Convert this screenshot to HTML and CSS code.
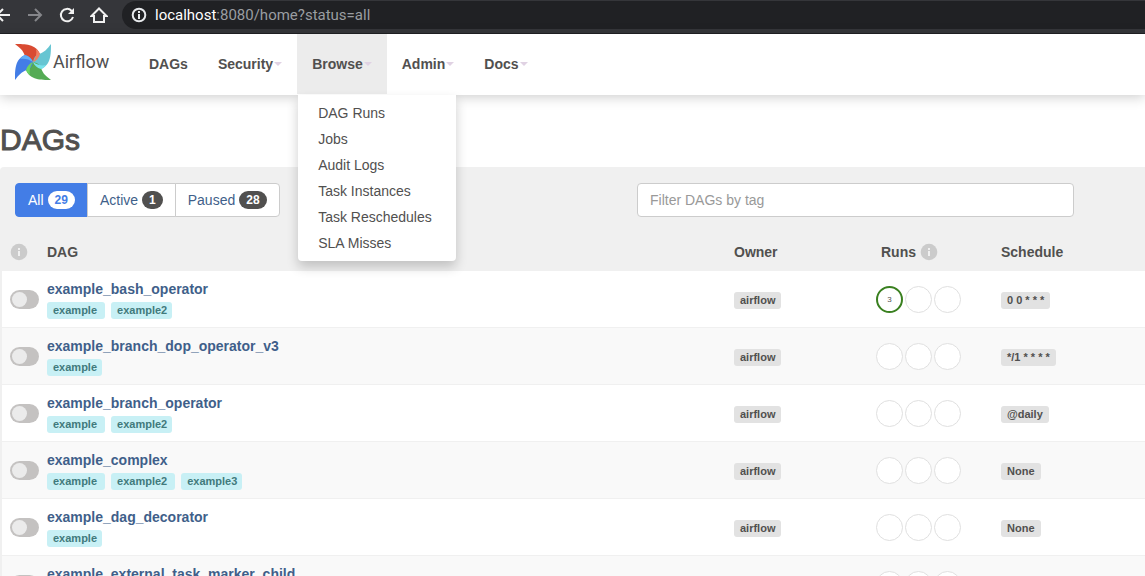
FILE: index.html
```html
<!DOCTYPE html>
<html lang="en">
<head>
    <meta charset="UTF-8">
    <meta name="viewport" content="width=device-width, initial-scale=1.0">
    <title>DAGs - Airflow</title>
    <link rel="stylesheet" href="styles.css">
</head>
<body>
    <div class="browser-bar">
        <button type="button" class="browser-btn" aria-label="Back">
            <svg width="18" height="18" viewBox="0 0 18 18"><path d="M16 9H3M9 3L3 9l6 6"/></svg>
        </button>
        <button type="button" class="browser-btn dim" aria-label="Forward">
            <svg width="18" height="18" viewBox="0 0 18 18"><path d="M2 9h13M9 3l6 6-6 6"/></svg>
        </button>
        <button type="button" class="browser-btn" aria-label="Reload">
            <svg width="18" height="18" viewBox="0 0 18 18"><path d="M15 11A6.200 6.200 0 1 1 13.500 4.700L15 6.200"/><path class="solid" d="M16 2v6h-6z"/></svg>
        </button>
        <button type="button" class="browser-btn" aria-label="Home">
            <svg width="18" height="18" viewBox="0 0 18 18"><path d="M1.500 10L9 2.500l7.500 7.500H14v6H4v-6z"/></svg>
        </button>
        <div class="url">
            <svg width="16" height="16" viewBox="0 0 16 16"><circle cx="8" cy="8" r="6.300"/><path d="M8 7v5M8 4v2"/></svg>
            <span><b>localhost</b>:8080/home?status=all</span>
        </div>
    </div>

    <nav class="navbar">
        <a class="brand" href="#">
            <svg width="36" height="36" viewBox="0 0 36 36">
                <defs>
                    <path id="blade" d="M0 0C10 0 21 0 25 10C24 14 21 17 18 18C13 17 11 15 10 12C8 6 5 4 0 0z"/>
                    <path id="fold" d="M21 5Q24 7 25 10C24 14 21 17 18 18C21 14 22 9 21 5z"/>
                </defs>
                <use href="#blade" fill="#d94b32"/>
                <use href="#blade" fill="#66c5d2" transform="rotate(90 18 18)"/>
                <use href="#blade" fill="#55ab55" transform="rotate(180 18 18)"/>
                <use href="#blade" fill="#437de6" transform="rotate(270 18 18)"/>
                <use href="#fold" fill="#f08063"/>
                <use href="#fold" fill="#78e3ec" transform="rotate(90 18 18)"/>
                <use href="#fold" fill="#68d464" transform="rotate(180 18 18)"/>
                <use href="#fold" fill="#63aff8" transform="rotate(270 18 18)"/>
            </svg>
            <span>Airflow</span>
        </a>
        <ul class="menu">
            <li><a href="#">DAGs</a></li>
            <li><a href="#">Security<i class="caret"></i></a></li>
            <li class="open">
                <a href="#">Browse<i class="caret"></i></a>
                <ul class="dropdown">
                    <li><a href="#">DAG Runs</a></li>
                    <li><a href="#">Jobs</a></li>
                    <li><a href="#">Audit Logs</a></li>
                    <li><a href="#">Task Instances</a></li>
                    <li><a href="#">Task Reschedules</a></li>
                    <li><a href="#">SLA Misses</a></li>
                </ul>
            </li>
            <li><a href="#">Admin<i class="caret"></i></a></li>
            <li><a href="#">Docs<i class="caret"></i></a></li>
        </ul>
    </nav>

    <main>
        <h2>DAGs</h2>
        <div class="panel">
            <div class="filters">
                <div class="btn-group">
                    <a class="btn active" href="#">All <span class="badge">29</span></a>
                    <a class="btn" href="#">Active <span class="badge">1</span></a>
                    <a class="btn" href="#">Paused <span class="badge">28</span></a>
                </div>
                <input type="text" class="tag-filter" placeholder="Filter DAGs by tag" aria-label="Filter DAGs by tag">
            </div>
            <table>
                <thead>
                    <tr>
                        <th class="col-toggle"><svg class="info" width="18" height="18" viewBox="0 0 18 18"><circle cx="9" cy="9" r="8.300"/><path d="M9 8v5M9 5v2"/></svg></th>
                        <th>DAG</th>
                        <th class="col-owner">Owner</th>
                        <th class="col-runs"><span class="runs-head">Runs <svg class="info" width="18" height="18" viewBox="0 0 18 18"><circle cx="9" cy="9" r="8.300"/><path d="M9 8v5M9 5v2"/></svg></span></th>
                        <th class="col-schedule">Schedule</th>
                    </tr>
                </thead>
                <tbody>
                    <tr>
                        <td><input type="checkbox" class="switch" aria-label="example_bash_operator"></td>
                        <td>
                            <a class="dag" href="#">example_bash_operator</a>
                            <div class="tags"><a class="tag" href="#">example</a><a class="tag" href="#">example2</a></div>
                        </td>
                        <td><a class="label" href="#">airflow</a></td>
                        <td><div class="runs"><span class="run success">3</span><span class="run"></span><span class="run"></span></div></td>
                        <td><a class="label" href="#">0 0 * * *</a></td>
                    </tr>
                    <tr>
                        <td><input type="checkbox" class="switch" aria-label="example_branch_dop_operator_v3"></td>
                        <td>
                            <a class="dag" href="#">example_branch_dop_operator_v3</a>
                            <div class="tags"><a class="tag" href="#">example</a></div>
                        </td>
                        <td><a class="label" href="#">airflow</a></td>
                        <td><div class="runs"><span class="run"></span><span class="run"></span><span class="run"></span></div></td>
                        <td><a class="label" href="#">*/1 * * * *</a></td>
                    </tr>
                    <tr>
                        <td><input type="checkbox" class="switch" aria-label="example_branch_operator"></td>
                        <td>
                            <a class="dag" href="#">example_branch_operator</a>
                            <div class="tags"><a class="tag" href="#">example</a><a class="tag" href="#">example2</a></div>
                        </td>
                        <td><a class="label" href="#">airflow</a></td>
                        <td><div class="runs"><span class="run"></span><span class="run"></span><span class="run"></span></div></td>
                        <td><a class="label" href="#">@daily</a></td>
                    </tr>
                    <tr>
                        <td><input type="checkbox" class="switch" aria-label="example_complex"></td>
                        <td>
                            <a class="dag" href="#">example_complex</a>
                            <div class="tags"><a class="tag" href="#">example</a><a class="tag" href="#">example2</a><a class="tag" href="#">example3</a></div>
                        </td>
                        <td><a class="label" href="#">airflow</a></td>
                        <td><div class="runs"><span class="run"></span><span class="run"></span><span class="run"></span></div></td>
                        <td><a class="label" href="#">None</a></td>
                    </tr>
                    <tr>
                        <td><input type="checkbox" class="switch" aria-label="example_dag_decorator"></td>
                        <td>
                            <a class="dag" href="#">example_dag_decorator</a>
                            <div class="tags"><a class="tag" href="#">example</a></div>
                        </td>
                        <td><a class="label" href="#">airflow</a></td>
                        <td><div class="runs"><span class="run"></span><span class="run"></span><span class="run"></span></div></td>
                        <td><a class="label" href="#">None</a></td>
                    </tr>
                    <tr>
                        <td><input type="checkbox" class="switch" aria-label="example_external_task_marker_child"></td>
                        <td>
                            <a class="dag" href="#">example_external_task_marker_child</a>
                            <div class="tags"></div>
                        </td>
                        <td></td>
                        <td><div class="runs"><span class="run"></span><span class="run"></span><span class="run"></span></div></td>
                        <td></td>
                    </tr>
                </tbody>
            </table>
        </div>
    </main>
</body>
</html>
```
FILE: styles.css
```css
* {
    box-sizing: border-box;
}
body {
    margin: 0;
    background-color: #fff;
    color: #51504f;
    font-family: "Liberation Sans", Arial, sans-serif;
    font-size: 14px;
    line-height: 20px;
}
a {
    color: inherit;
    text-decoration: none;
}
ul {
    margin: 0;
    padding: 0;
    list-style: none;
}

/* browser toolbar */
.browser-bar {
    display: flex;
    height: 34px;
    padding-bottom: 4px;
    overflow: hidden;
    align-items: center;
    gap: 14px;
    background-color: #35363a;
    border-bottom: 1px solid #202124;
}
.browser-btn {
    flex: none;
    width: 18px;
    height: 18px;
    padding: 0;
    border: none;
    background: none;
    color: #f1f1f1;
}
.browser-btn:first-child {
    margin-left: -6px;
}
.browser-btn.dim {
    color: #85868a;
}
.browser-btn svg {
    display: block;
    fill: none;
    stroke: currentColor;
    stroke-width: 2;
}
.browser-btn .solid {
    fill: currentColor;
    stroke: none;
}
.url {
    display: flex;
    flex: 1;
    height: 28px;
    margin-right: -20px;
    padding-left: 9px;
    align-items: center;
    gap: 8px;
    border-radius: 14px;
    background-color: #202124;
    color: #9a9da1;
    font-family: Roboto, sans-serif;
    font-size: 15px;
}
.url b {
    color: #fff;
    font-weight: 400;
}
.url svg {
    fill: none;
    stroke: #e8eaed;
    stroke-width: 2;
}

/* navbar */
.navbar {
    position: relative;
    display: flex;
    height: 61px;
    padding-left: 15px;
    background-color: #fff;
    box-shadow: 0 2px 12px rgba(0, 0, 0, 0.2);
}
.brand {
    display: flex;
    width: 119px;
    height: 56px;
    align-items: center;
    gap: 2px;
    font-family: Roboto, sans-serif;
    font-size: 18px;
}
.menu {
    display: flex;
    font-weight: bold;
}
.menu > li {
    position: relative;
    height: 60px;
}
.menu > li > a {
    display: flex;
    height: 60px;
    padding: 0 15px;
    align-items: center;
}
.menu > .open {
    background-color: #ececec;
}
.caret {
    margin-left: 1px;
    border: 4px solid transparent;
    border-top-color: #e0d2e3;
    border-bottom: 0;
}
.dropdown {
    position: absolute;
    top: 61px;
    left: 1px;
    width: 158px;
    padding: 5px 0;
    border-radius: 0 0 4px 4px;
    background-color: #fff;
    box-shadow: 0 6px 12px rgba(0, 0, 0, 0.2);
    font-weight: normal;
}
.dropdown a {
    display: block;
    padding: 3px 20px;
    white-space: nowrap;
}

/* page */
h2 {
    margin: 0;
    padding: 28px 0 11px;
    font-size: 30px;
    font-weight: normal;
    line-height: 33px;
    -webkit-text-stroke: 1px #51504f;
}
.panel {
    padding-top: 16px;
    border-radius: 4px 0 0 0;
    background-color: #f0f0f0;
}
.filters {
    display: grid;
    grid-template-columns: 622fr 437fr 71fr;
    padding-left: 15px;
}
.btn-group {
    display: flex;
}
.btn {
    display: flex;
    height: 34px;
    margin-right: -1px;
    padding: 0 12px;
    align-items: center;
    gap: 4px;
    border: 1px solid #ccc;
    background-color: #fff;
    color: #3f5f8a;
}
.btn:first-child {
    border-radius: 4px 0 0 4px;
}
.btn:last-child {
    border-radius: 0 4px 4px 0;
}
.btn.active {
    border-color: #437de6;
    background-color: #437de6;
    color: #fff;
}
.badge {
    padding: 0 7px;
    border-radius: 9px;
    background-color: #51504f;
    color: #fff;
    font-size: 12px;
    font-weight: bold;
    line-height: 18px;
}
.active .badge {
    background-color: #fff;
    color: #437de6;
}
.tag-filter {
    width: 100%;
    height: 34px;
    padding: 0 12px;
    border: 1px solid #ccc;
    border-radius: 4px;
    background-color: #fff;
    font: inherit;
}
.tag-filter::placeholder {
    color: #999;
}

/* dag table */
table {
    width: 100%;
    table-layout: fixed;
    border-collapse: separate;
    border-spacing: 0;
    border-left: 2px solid #f0f0f0;
}
th {
    padding: 25px 8px 9px;
    text-align: left;
}
.col-toggle {
    width: 37px;
}
.col-owner {
    width: 142px;
}
.col-runs {
    width: 125px;
}
.col-schedule {
    width: 152px;
}
.info {
    display: block;
    fill: #cbcbcb;
    stroke: #f0f0f0;
    stroke-width: 2;
}
.info circle {
    stroke: none;
}
.runs-head {
    display: flex;
    padding-left: 5px;
    align-items: center;
    gap: 4px;
}
td {
    padding: 8px;
    border-bottom: 1px solid #f0f0f0;
    background-color: #fff;
}
tr:nth-child(even) td {
    background-color: #f9f9f9;
}
.switch {
    display: block;
    width: 29px;
    height: 19px;
    margin: 0;
    appearance: none;
    border-radius: 10px;
    background-color: #c4c2c1;
}
.switch::before {
    content: "";
    display: block;
    width: 15px;
    height: 15px;
    margin: 2px;
    border-radius: 50%;
    background-color: #ebebeb;
}
.switch:checked::before {
    margin-left: 12px;
}
.dag {
    display: block;
    color: #3f5f8a;
    font-weight: bold;
    white-space: nowrap;
}
.tags {
    display: flex;
    min-height: 17px;
    margin-top: 3px;
    gap: 6px;
}
.tag,
.label {
    padding: 0 6px;
    border-radius: 3px;
    font-size: 11px;
    font-weight: bold;
    line-height: 17px;
}
.tag {
    padding-right: 8px;
    background-color: #c8f0f5;
    color: #417a7c;
}
.tag:last-child {
    padding-right: 5px;
}
.label {
    display: inline-block;
    background-color: #e2e2e2;
}
.runs {
    display: flex;
    gap: 2px;
}
.run {
    width: 27px;
    height: 27px;
    border: 1px solid #e0e0e0;
    border-radius: 50%;
    background-color: #fff;
    font-size: 8px;
    line-height: 23px;
    text-align: center;
}
.run.success {
    border: 2px solid #3a8020;
}
```
